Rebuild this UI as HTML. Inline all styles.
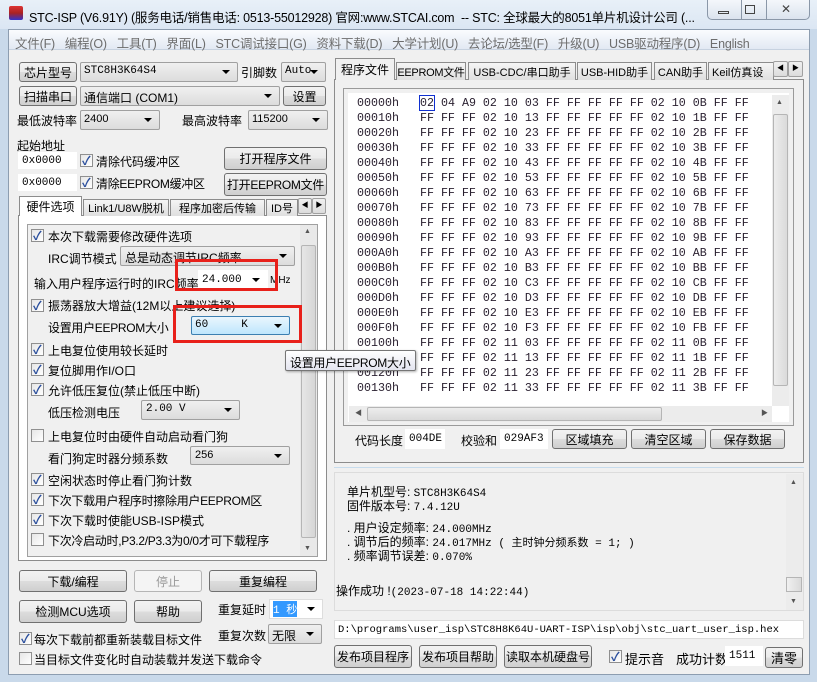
<!DOCTYPE html><html><head><meta charset="utf-8"><style>
*{box-sizing:border-box;margin:0;padding:0}
body{width:817px;height:682px;overflow:hidden;background:#c9d9ea;font-family:"Liberation Sans","Noto Sans CJK SC",sans-serif;font-size:12px;color:#000;position:relative}
.a{position:absolute;white-space:nowrap}
.btn{position:absolute;border:1px solid #707070;border-radius:3px;background:linear-gradient(#f2f2f2,#ebebeb 50%,#dddddd 51%,#cfcfcf);text-align:center;font-size:12px;display:flex;align-items:center;justify-content:center;white-space:nowrap;overflow:hidden}
.cb{position:absolute;border:1px solid #a0a0a0;border-radius:2px;background:linear-gradient(#f0f0f0,#dcdcdc);white-space:nowrap;overflow:hidden}
.cmb:after{content:"";position:absolute;right:7px;top:50%;margin-top:-2px;border:4px solid transparent;border-top:4px solid #000;border-bottom:0}
.fld{position:absolute;background:#fff;border:1px solid #c8c8c8;font-family:"Liberation Mono","Noto Sans CJK SC",monospace;font-size:11px;padding-left:3px;display:flex;align-items:center;white-space:nowrap}
.chk{position:absolute;width:13px;height:13px;border:1px solid #8f8f8f;background:linear-gradient(135deg,#e6e6e6,#fff)}
.chk.on:after{content:"✓";position:absolute;left:1px;top:-3px;font-size:12px;color:#2a4e9c;font-weight:bold}
.tab{position:absolute;border:1px solid #8c8c8c;border-bottom:none;background:linear-gradient(#f5f5f5,#dfdfdf);font-size:11px;display:flex;align-items:center;justify-content:center;white-space:nowrap;overflow:hidden}
.m{font-family:"Liberation Mono","Noto Sans CJK SC",monospace}
</style></head><body>
<!-- title -->
<div class="a" style="left:0;top:0;width:817px;height:29px;background:linear-gradient(#e8f0f8,#dbe6f3)"></div>
<div class="a" style="left:9px;top:6px;width:14px;height:14px;background:linear-gradient(#d33,#a22 50%,#33c);border-radius:2px"></div>
<div class="a" style="left:29px;top:7px;font-size:12.5px;letter-spacing:-0.2px;width:675px;overflow:hidden">STC-ISP (V6.91Y) (服务电话/销售电话: 0513-55012928) 官网:www.STCAI.com&nbsp; -- STC: 全球最大的8051单片机设计公司 (...</div>
<div class="a" style="left:707px;top:0;width:103px;height:20px;border:1px solid #8a97a8;border-top:none;border-radius:0 0 5px 5px;background:linear-gradient(#f4f7fb,#dbe3ee)"></div>
<div class="a" style="left:741px;top:0;width:1px;height:20px;background:#8a97a8"></div>
<div class="a" style="left:766px;top:0;width:1px;height:20px;background:#8a97a8"></div>
<div class="a" style="left:718px;top:11px;width:11px;height:3px;border:1px solid #444"></div>
<div class="a" style="left:745px;top:5px;width:10px;height:9px;border:1px solid #444"></div>
<div class="a" style="left:781px;top:2px;font-size:12px;color:#444">✕</div>
<!-- main body -->
<div class="a" style="left:8px;top:29px;width:802px;height:646px;background:#f0f0f0;border:1px solid #8d9db0"></div>
<div class="a" style="left:9px;top:30px;width:800px;height:20px;background:linear-gradient(#fafcfe,#e2e9f3);border-bottom:1px solid #c7d2e0"></div>
<div class="a" style="left:15px;top:33px;font-size:12.5px;color:#6d6d6d;letter-spacing:-0.2px">文件(F)&nbsp;&nbsp; 编程(O)&nbsp;&nbsp; 工具(T)&nbsp;&nbsp; 界面(L)&nbsp;&nbsp; STC调试接口(G)&nbsp;&nbsp; 资料下载(D)&nbsp;&nbsp; 大学计划(U)&nbsp;&nbsp; 去论坛/选型(F)&nbsp;&nbsp; 升级(U)&nbsp;&nbsp; USB驱动程序(D)&nbsp;&nbsp; English</div>

<!-- left top -->
<div class="btn" style="left:19px;top:62px;width:58px;height:20px">芯片型号</div>
<div class="cb cmb m" style="left:80px;top:62px;width:158px;height:20px;padding:2px 3px;font-size:11px">STC8H3K64S4</div>
<div class="a" style="left:241px;top:64px">引脚数</div>
<div class="cb cmb m" style="left:281px;top:62px;width:45px;height:20px;padding:2px 3px;font-size:11px">Auto</div>
<div class="btn" style="left:19px;top:86px;width:58px;height:20px">扫描串口</div>
<div class="cb cmb" style="left:80px;top:86px;width:200px;height:20px;padding:2px 3px">通信端口 (COM1)</div>
<div class="btn" style="left:283px;top:86px;width:43px;height:20px">设置</div>
<div class="a" style="left:17px;top:112px">最低波特率</div>
<div class="cb cmb" style="left:80px;top:110px;width:80px;height:20px;padding:2px 3px;font-size:11px">2400</div>
<div class="a" style="left:182px;top:112px">最高波特率</div>
<div class="cb cmb" style="left:248px;top:110px;width:80px;height:20px;padding:2px 3px;font-size:11px">115200</div>
<div class="a" style="left:17px;top:137px">起始地址</div>
<div class="fld" style="left:18px;top:152px;width:59px;height:17px;border-color:#fff">0x0000</div>
<div class="chk on" style="left:80px;top:154px"></div><div class="a" style="left:96px;top:153px">清除代码缓冲区</div>
<div class="btn" style="left:224px;top:147px;width:103px;height:23px">打开程序文件</div>
<div class="fld" style="left:18px;top:174px;width:59px;height:17px;border-color:#fff">0x0000</div>
<div class="chk on" style="left:80px;top:176px"></div><div class="a" style="left:96px;top:175px;letter-spacing:-0.3px">清除EEPROM缓冲区</div>
<div class="btn" style="left:224px;top:173px;width:103px;height:23px;letter-spacing:-0.3px">打开EEPROM文件</div>

<!-- left tabs -->
<div class="a" style="left:18px;top:215px;width:309px;height:346px;border:1px solid #8c8c8c;background:#fff"></div>
<div class="tab" style="left:19px;top:196px;width:63px;height:20px;background:#fff;font-size:12px">硬件选项</div>
<div class="tab" style="left:83px;top:199px;width:86px;height:17px">Link1/U8W脱机</div>
<div class="tab" style="left:170px;top:199px;width:95px;height:17px">程序加密后传输</div>
<div class="tab" style="left:266px;top:199px;width:32px;height:17px;justify-content:flex-start;padding-left:4px">ID号</div>
<div class="cb" style="left:298px;top:198px;width:14px;height:16px;font-size:7px;text-align:center;line-height:14px">◀</div>
<div class="cb" style="left:312px;top:198px;width:14px;height:16px;font-size:7px;text-align:center;line-height:14px">▶</div>
<div class="a" style="left:27px;top:224px;width:291px;height:333px;border:1px solid #a0a0a0;background:#f0f0f0"></div>
<div class="a" style="left:300px;top:225px;width:17px;height:331px;background:#e9e9e9"></div>
<div class="a" style="left:301px;top:245px;width:15px;height:293px;border:1px solid #b5b5b5;border-radius:2px;background:linear-gradient(90deg,#e6e6e6,#d6d6d6)"></div>
<div class="a" style="left:304px;top:228px;font-size:7px;color:#555">▲</div>
<div class="a" style="left:304px;top:545px;font-size:7px;color:#555">▼</div>

<div class="chk on" style="left:31px;top:229px"></div><div class="a" style="left:48px;top:228px">本次下载需要修改硬件选项</div>
<div class="a" style="left:48px;top:250px">IRC调节模式</div>
<div class="cb cmb" style="left:120px;top:246px;width:175px;height:20px;padding:2px 4px">总是动态调节IRC频率</div>
<div class="a" style="left:34px;top:275px">输入用户程序运行时的IRC频率</div>
<div class="fld cmb" style="left:198px;top:270px;width:70px;height:19px;border-color:#fff">24.000</div>
<div class="a" style="left:270px;top:275px;font-size:10px">MHz</div>
<div class="a" style="left:175px;top:259px;width:103px;height:32px;border:3px solid #e8201a"></div>
<div class="chk on" style="left:31px;top:299px"></div><div class="a" style="left:48px;top:297px">振荡器放大增益(12M以上建议选择)</div>
<div class="a" style="left:48px;top:319px;letter-spacing:-0.3px">设置用户EEPROM大小</div>
<div class="a cmb m" style="left:191px;top:316px;width:99px;height:19px;border:1px solid #3c7fb1;border-radius:2px;background:linear-gradient(#eaf6fd,#bee6fd);padding:2px 3px;font-size:11px">60&nbsp;&nbsp;&nbsp;&nbsp; K</div>
<div class="a" style="left:173px;top:305px;width:129px;height:38px;border:3px solid #e8201a"></div>
<div class="chk on" style="left:31px;top:343px"></div><div class="a" style="left:48px;top:342px">上电复位使用较长延时</div>
<div class="chk on" style="left:31px;top:363px"></div><div class="a" style="left:48px;top:362px">复位脚用作I/O口</div>
<div class="chk on" style="left:31px;top:383px"></div><div class="a" style="left:48px;top:382px">允许低压复位(禁止低压中断)</div>
<div class="a" style="left:48px;top:404px">低压检测电压</div>
<div class="cb cmb m" style="left:141px;top:400px;width:99px;height:20px;padding:2px 4px;font-size:11px">2.00 V</div>
<div class="chk" style="left:31px;top:429px"></div><div class="a" style="left:48px;top:428px">上电复位时由硬件自动启动看门狗</div>
<div class="a" style="left:48px;top:450px">看门狗定时器分频系数</div>
<div class="cb cmb" style="left:190px;top:446px;width:100px;height:19px;padding:2px 4px;font-size:11px">256</div>
<div class="chk on" style="left:31px;top:473px"></div><div class="a" style="left:48px;top:472px">空闲状态时停止看门狗计数</div>
<div class="chk on" style="left:31px;top:493px"></div><div class="a" style="left:48px;top:492px;letter-spacing:-0.3px">下次下载用户程序时擦除用户EEPROM区</div>
<div class="chk on" style="left:31px;top:513px"></div><div class="a" style="left:48px;top:512px">下次下载时使能USB-ISP模式</div>
<div class="chk" style="left:31px;top:533px"></div><div class="a" style="left:48px;top:532px;letter-spacing:-0.3px">下次冷启动时,P3.2/P3.3为0/0才可下载程序</div>

<!-- left bottom -->
<div class="btn" style="left:19px;top:570px;width:108px;height:22px">下载/编程</div>
<div class="btn" style="left:134px;top:570px;width:68px;height:22px;color:#999;border-color:#b5b5b5;background:#f4f4f4">停止</div>
<div class="btn" style="left:209px;top:570px;width:108px;height:22px">重复编程</div>
<div class="btn" style="left:19px;top:600px;width:108px;height:23px">检测MCU选项</div>
<div class="btn" style="left:134px;top:600px;width:68px;height:23px">帮助</div>
<div class="a" style="left:218px;top:601px">重复延时</div>
<div class="fld cmb" style="left:269px;top:599px;width:54px;height:20px;border-color:#ddd"><span style="background:#3399ff;color:#fff">1 秒</span></div>
<div class="a" style="left:218px;top:627px">重复次数</div>
<div class="cb cmb" style="left:268px;top:624px;width:54px;height:20px;padding:2px 3px">无限</div>
<div class="chk on" style="left:19px;top:632px"></div><div class="a" style="left:34px;top:631px">每次下载前都重新装载目标文件</div>
<div class="chk" style="left:19px;top:652px"></div><div class="a" style="left:34px;top:651px">当目标文件变化时自动装载并发送下载命令</div>

<!-- right tabs -->
<div class="a" style="left:334px;top:79px;width:470px;height:384px;border:1px solid #8c8c8c;background:#f0f0f0"></div>
<div class="tab" style="left:335px;top:58px;width:60px;height:22px;background:#f0f0f0;font-size:12px">程序文件</div>
<div class="tab" style="left:396px;top:62px;width:70px;height:18px;letter-spacing:-0.3px">EEPROM文件</div>
<div class="tab" style="left:468px;top:62px;width:108px;height:18px">USB-CDC/串口助手</div>
<div class="tab" style="left:577px;top:62px;width:75px;height:18px">USB-HID助手</div>
<div class="tab" style="left:654px;top:62px;width:53px;height:18px">CAN助手</div>
<div class="tab" style="left:708px;top:62px;width:66px;height:18px;justify-content:flex-start;padding-left:3px">Keil仿真设</div>
<div class="cb" style="left:773px;top:61px;width:15px;height:16px;font-size:7px;text-align:center;line-height:14px">◀</div>
<div class="cb" style="left:788px;top:61px;width:15px;height:16px;font-size:7px;text-align:center;line-height:14px">▶</div>
<div class="a" style="left:343px;top:88px;width:451px;height:338px;border:1px solid #9a9a9a;background:#f0f0f0"></div>
<div class="a" style="left:348px;top:93px;width:441px;height:329px;background:#fff"></div>
<pre class="a m" style="left:357px;top:96px;font-size:11.67px;line-height:15px;color:#2a2030;white-space:pre">00000h   <span style="outline:1px solid #1030d0">02</span> 04 A9 02 10 03 FF FF FF FF FF 02 10 0B FF FF
00010h   FF FF FF 02 10 13 FF FF FF FF FF 02 10 1B FF FF
00020h   FF FF FF 02 10 23 FF FF FF FF FF 02 10 2B FF FF
00030h   FF FF FF 02 10 33 FF FF FF FF FF 02 10 3B FF FF
00040h   FF FF FF 02 10 43 FF FF FF FF FF 02 10 4B FF FF
00050h   FF FF FF 02 10 53 FF FF FF FF FF 02 10 5B FF FF
00060h   FF FF FF 02 10 63 FF FF FF FF FF 02 10 6B FF FF
00070h   FF FF FF 02 10 73 FF FF FF FF FF 02 10 7B FF FF
00080h   FF FF FF 02 10 83 FF FF FF FF FF 02 10 8B FF FF
00090h   FF FF FF 02 10 93 FF FF FF FF FF 02 10 9B FF FF
000A0h   FF FF FF 02 10 A3 FF FF FF FF FF 02 10 AB FF FF
000B0h   FF FF FF 02 10 B3 FF FF FF FF FF 02 10 BB FF FF
000C0h   FF FF FF 02 10 C3 FF FF FF FF FF 02 10 CB FF FF
000D0h   FF FF FF 02 10 D3 FF FF FF FF FF 02 10 DB FF FF
000E0h   FF FF FF 02 10 E3 FF FF FF FF FF 02 10 EB FF FF
000F0h   FF FF FF 02 10 F3 FF FF FF FF FF 02 10 FB FF FF
00100h   FF FF FF 02 11 03 FF FF FF FF FF 02 11 0B FF FF
00110h   FF FF FF 02 11 13 FF FF FF FF FF 02 11 1B FF FF
00120h   FF FF FF 02 11 23 FF FF FF FF FF 02 11 2B FF FF
00130h   FF FF FF 02 11 33 FF FF FF FF FF 02 11 3B FF FF</pre>
<div class="a" style="left:772px;top:95px;width:17px;height:311px;background:#ececec"></div>
<div class="a" style="left:773px;top:114px;width:15px;height:272px;border:1px solid #b5b5b5;border-radius:2px;background:linear-gradient(90deg,#ededed,#dadada)"></div>
<div class="a" style="left:776px;top:99px;font-size:7px;color:#555">▲</div>
<div class="a" style="left:349px;top:406px;width:423px;height:16px;background:#ececec"></div>
<div class="a" style="left:367px;top:407px;width:295px;height:14px;border:1px solid #b5b5b5;border-radius:2px;background:linear-gradient(#ededed,#d9d9d9)"></div>
<div class="a" style="left:355px;top:408px;font-size:7px;color:#555">◀</div>
<div class="a" style="left:761px;top:408px;font-size:7px;color:#555">▶</div>
<div class="a" style="left:355px;top:432px">代码长度</div>
<div class="fld" style="left:405px;top:429px;width:40px;height:20px;border-color:#fff">004DE</div>
<div class="a" style="left:461px;top:432px">校验和</div>
<div class="fld" style="left:500px;top:429px;width:48px;height:20px;border-color:#fff">029AF3</div>
<div class="btn" style="left:552px;top:429px;width:75px;height:20px">区域填充</div>
<div class="btn" style="left:631px;top:429px;width:75px;height:20px">清空区域</div>
<div class="btn" style="left:710px;top:429px;width:75px;height:20px">保存数据</div>
<div class="a" style="left:334px;top:467px;width:470px;height:1px;background:#c7dced"></div>
<!-- info -->
<div class="a" style="left:334px;top:472px;width:470px;height:139px;border:1px solid #dcdcdc;background:#f0f0f0"></div>
<div class="a" style="left:786px;top:474px;width:17px;height:136px;background:#ececec"></div>
<div class="a" style="left:786px;top:577px;width:16px;height:15px;border:1px solid #b5b5b5;background:linear-gradient(90deg,#f0f0f0,#dadada)"></div>
<div class="a" style="left:790px;top:479px;font-size:7px;color:#555">▲</div>
<div class="a" style="left:790px;top:598px;font-size:7px;color:#555">▼</div>
<div class="a" style="left:347px;top:486px;line-height:12px;font-size:12px">单片机型号: <span class="m" style="font-size:11px">STC8H3K64S4</span><br>固件版本号: <span class="m" style="font-size:11px">7.4.12U</span></div>
<div class="a" style="left:347px;top:522px;line-height:12px;font-size:12px">. 用户设定频率: <span class="m" style="font-size:11px">24.000MHz</span><br>. 调节后的频率: <span class="m" style="font-size:11px">24.017MHz ( 主时钟分频系数 = 1; )</span><br>. 频率调节误差: <span class="m" style="font-size:11px">0.070%</span></div>
<div class="a" style="left:336px;top:582px">操作成功 !<span class="m" style="font-size:11px">(2023-07-18 14:22:44)</span></div>
<div class="fld" style="left:334px;top:620px;width:470px;height:19px;border-color:#dcdcdc;background:#fff;font-size:10.5px">D:\programs\user_isp\STC8H8K64U-UART-ISP\isp\obj\stc_uart_user_isp.hex</div>
<div class="btn" style="left:334px;top:645px;width:78px;height:23px">发布项目程序</div>
<div class="btn" style="left:419px;top:645px;width:78px;height:23px">发布项目帮助</div>
<div class="btn" style="left:504px;top:645px;width:88px;height:23px">读取本机硬盘号</div>
<div class="chk on" style="left:609px;top:650px"></div><div class="a" style="left:625px;top:649px;font-size:13px">提示音</div>
<div class="a" style="left:676px;top:649px;font-size:13px">成功计数</div>
<div class="fld" style="left:725px;top:646px;width:38px;height:20px;border-color:#fff">1511</div>
<div class="btn" style="left:765px;top:647px;width:38px;height:21px;font-size:13px">清零</div>
<!-- tooltip -->
<div class="a" style="left:285px;top:350px;width:131px;height:21px;border:1px solid #767676;border-radius:2px;background:linear-gradient(#fff,#e4e5f0);padding:3px 4px;box-shadow:1px 1px 2px rgba(0,0,0,.3);letter-spacing:-0.3px">设置用户EEPROM大小</div>
</body></html>
